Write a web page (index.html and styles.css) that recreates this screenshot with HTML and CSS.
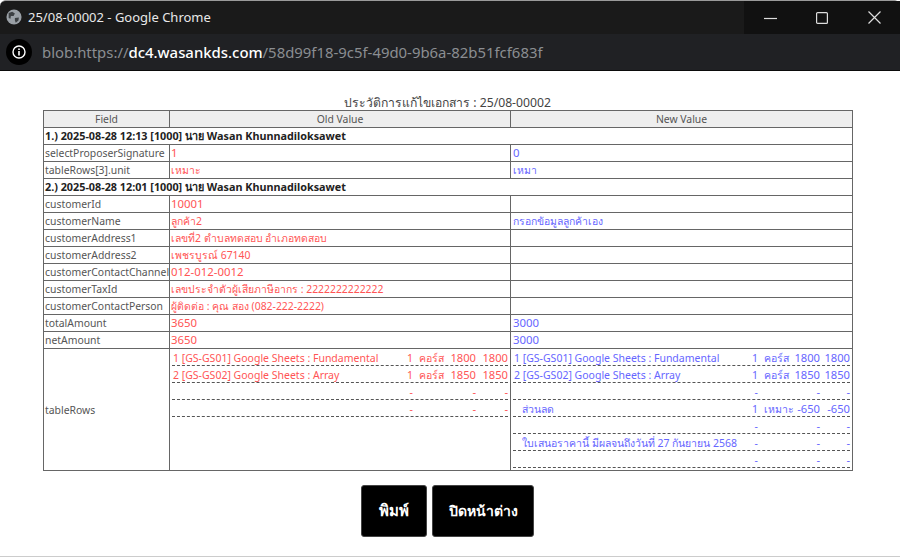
FILE: index.html
```html
<!DOCTYPE html>
<html lang="th">

<head>
    <meta charset="utf-8">
    <title>25/08-00002 - Google Chrome</title>
    <link rel="stylesheet" href="styles.css">
</head>

<body>
    <div class="titlebar">
        <svg class="globe" width="16" height="16" viewBox="0 0 18 18">
            <circle cx="9" cy="9" r="8.5" fill="#9aa0a6" />
            <path d="M3 4.5 L7 3 L10 5 L8.5 8 L5.5 8 L5 11 L3 10 Z M10 10 L14.5 9.5 L14 13 L11 15.5 L10 13 Z" fill="#3c4043" />
        </svg>
        <span class="title">25/08-00002 - Google Chrome</span>
        <div class="winbtns">
            <div class="winbtn">
                <svg width="13" height="12" viewBox="0 0 13 12"><path d="M0 6.5 H13" stroke="#ddd" stroke-width="1.2" /></svg>
            </div>
            <div class="winbtn">
                <svg width="12" height="12" viewBox="0 0 12 12"><rect x="0.6" y="0.6" width="10.8" height="10.8" rx="1" fill="none" stroke="#ddd" stroke-width="1.2" /></svg>
            </div>
            <div class="winbtn">
                <svg width="13" height="13" viewBox="0 0 13 13"><path d="M0.5 0.5 L12.5 12.5 M12.5 0.5 L0.5 12.5" stroke="#ddd" stroke-width="1.2" /></svg>
            </div>
        </div>
    </div>
    <div class="addressbar">
        <div class="infoicon">
            <svg width="14" height="14" viewBox="0 0 14 14">
                <circle cx="7" cy="7" r="6" fill="none" stroke="#fff" stroke-width="1.4" />
                <path d="M7 6 V10.5 M7 3.4 V5" stroke="#fff" stroke-width="1.6" />
            </svg>
        </div>
        <span class="url">blob:https://<b>dc4.wasankds.com</b>/58d99f18-9c5f-49d0-9b6a-82b51fcf683f</span>
    </div>

    <div class="page">
        <div class="heading">ประวัติการแก้ไขเอกสาร : 25/08-00002</div>
        <table class="log">
            <colgroup>
                <col class="c1">
                <col class="c2">
                <col class="c3">
            </colgroup>
            <tr><th>Field</th><th>Old Value</th><th>New Value</th></tr>
            <tr><td colspan="3" class="group">1.) 2025-08-28 12:13 [1000] นาย Wasan Khunnadiloksawet</td></tr>
            <tr><td>selectProposerSignature</td><td class="old digits">1</td><td class="new digits">0</td></tr>
            <tr><td>tableRows[3].unit</td><td class="old">เหมาะ</td><td class="new">เหมา</td></tr>
            <tr><td colspan="3" class="group">2.) 2025-08-28 12:01 [1000] นาย Wasan Khunnadiloksawet</td></tr>
            <tr><td>customerId</td><td class="old digits">10001</td><td class="new"></td></tr>
            <tr><td>customerName</td><td class="old">ลูกค้า2</td><td class="new">กรอกข้อมูลลูกค้าเอง</td></tr>
            <tr><td>customerAddress1</td><td class="old">เลขที่2 ตำบลทดสอบ อำเภอทดสอบ</td><td class="new"></td></tr>
            <tr><td>customerAddress2</td><td class="old">เพชรบูรณ์ 67140</td><td class="new"></td></tr>
            <tr><td>customerContactChannel</td><td class="old digits">012-012-0012</td><td class="new"></td></tr>
            <tr><td>customerTaxId</td><td class="old">เลขประจำตัวผู้เสียภาษีอากร : 2222222222222</td><td class="new"></td></tr>
            <tr><td>customerContactPerson</td><td class="old">ผู้ติดต่อ : คุณ สอง (082-222-2222)</td><td class="new"></td></tr>
            <tr><td>totalAmount</td><td class="old digits">3650</td><td class="new digits">3000</td></tr>
            <tr><td>netAmount</td><td class="old digits">3650</td><td class="new digits">3000</td></tr>
            <tr class="tall">
                <td>tableRows</td>
                <td class="old nested">
                    <div class="item"><span class="name">1 [GS-GS01] Google Sheets : Fundamental</span><span class="qty">1</span><span class="unit">คอร์ส</span><span class="num">1800</span><span class="num">1800</span></div>
                    <div class="item"><span class="name">2 [GS-GS02] Google Sheets : Array</span><span class="qty">1</span><span class="unit">คอร์ส</span><span class="num">1850</span><span class="num">1850</span></div>
                    <div class="item"><span class="name"></span><span class="qty">-</span><span class="unit"></span><span class="num">-</span><span class="num">-</span></div>
                    <div class="item"><span class="name"></span><span class="qty">-</span><span class="unit"></span><span class="num">-</span><span class="num">-</span></div>
                </td>
                <td class="new nested">
                    <div class="item"><span class="name">1 [GS-GS01] Google Sheets : Fundamental</span><span class="qty">1</span><span class="unit">คอร์ส</span><span class="num">1800</span><span class="num">1800</span></div>
                    <div class="item"><span class="name">2 [GS-GS02] Google Sheets : Array</span><span class="qty">1</span><span class="unit">คอร์ส</span><span class="num">1850</span><span class="num">1850</span></div>
                    <div class="item"><span class="name"></span><span class="qty">-</span><span class="unit"></span><span class="num">-</span><span class="num">-</span></div>
                    <div class="item"><span class="name indent">ส่วนลด</span><span class="qty">1</span><span class="unit">เหมาะ</span><span class="num">-650</span><span class="num">-650</span></div>
                    <div class="item"><span class="name"></span><span class="qty">-</span><span class="unit"></span><span class="num">-</span><span class="num">-</span></div>
                    <div class="item"><span class="name indent">ใบเสนอราคานี้ มีผลจนถึงวันที่ 27 กันยายน 2568</span><span class="qty">-</span><span class="unit"></span><span class="num">-</span><span class="num">-</span></div>
                    <div class="item"><span class="name"></span><span class="qty">-</span><span class="unit"></span><span class="num">-</span><span class="num">-</span></div>
                </td>
            </tr>
        </table>
        <div class="buttons">
            <button class="btn print">พิมพ์</button>
            <button class="btn close">ปิดหน้าต่าง</button>
        </div>
    </div>
</body>

</html>
```

FILE: styles.css
```css
body {
    box-sizing: border-box;
    margin: 0;
    height: 557px;
    overflow: hidden;
    border-bottom: 1px solid #ccc;
    background-color: white;
    font-family: "Noto Sans", "Noto Sans CJK SC", sans-serif;
}

.titlebar {
    box-sizing: border-box;
    display: flex;
    align-items: center;
    height: 34px;
    border-top: 1px solid #9a9a9a;
    border-radius: 6px 6px 0 0;
    background-color: #1a1a1a;
    color: #e8e8e8;
    font-size: 13px;
}

.globe {
    margin-left: 6px;
    margin-right: 6px;
    margin-bottom: 2px;
}

.title {
    flex: 1;
    padding-bottom: 2px;
}

.winbtns {
    display: flex;
    height: 100%;
}

.winbtn {
    display: flex;
    align-items: center;
    justify-content: center;
    width: 52px;
    background-color: #111;
}

.addressbar {
    display: flex;
    align-items: center;
    height: 36px;
    border-bottom: 1px solid #0b0b0b;
    background-color: #202124;
    color: #8b8e92;
    font-size: 14.9px;
}

.addressbar b {
    color: #fff;
    font-weight: 500;
}

.infoicon {
    display: flex;
    align-items: center;
    justify-content: center;
    width: 26px;
    height: 26px;
    margin-left: 6px;
    margin-right: 10px;
    border-radius: 50%;
    background-color: #000;
}

.page {
    padding: 24px 48px 0 43px;
}

.heading {
    height: 15px;
    color: #444;
    font-size: 12.2px;
    line-height: 15px;
    text-align: center;
}

.log {
    width: 810px;
    border-collapse: collapse;
    table-layout: fixed;
    color: #555;
    font-size: 10.4px;
}

.c1 {
    width: 126px;
}

.c2 {
    width: 341px;
}

.log th,
.log td {
    height: 16px;
    padding: 0 1px;
    border: 1px solid #666;
    line-height: 16px;
    white-space: nowrap;
    overflow: hidden;
}

.log th {
    background-color: #eee;
    font-weight: normal;
}

.log .group {
    color: #222;
    font-size: 10.8px;
    font-weight: bold;
}

.log .old {
    color: #f55;
}

.log .new {
    padding-left: 2px;
    color: #66f;
}

.log .digits {
    font-size: 11.4px;
}

.log .nested {
    height: 121px;
    padding: 0 2px;
    font-size: 10.5px;
    vertical-align: top;
}

.item {
    display: flex;
    height: 16px;
    border-bottom: 1px dashed #555;
    line-height: 18px;
}

.name {
    flex: 1;
    padding-left: 1px;
}

.indent {
    padding-left: 9px;
}

.qty {
    width: 10px;
    text-align: right;
}

.unit {
    box-sizing: border-box;
    width: 32px;
    padding-left: 6px;
}

.num {
    width: 30px;
    font-size: 11.2px;
    text-align: right;
}

.old .unit {
    width: 31px;
}

.old .num {
    width: 32px;
}

.buttons {
    display: flex;
    justify-content: center;
    gap: 5px;
    margin-top: 14px;
}

.btn {
    height: 52px;
    border: 1px solid #444;
    border-radius: 3px;
    background-color: #000;
    color: #fff;
    font-family: "Noto Sans", sans-serif;
    font-size: 14px;
    font-weight: 600;
}

.print {
    width: 66px;
    font-size: 15px;
}

.close {
    width: 102px;
}
```
